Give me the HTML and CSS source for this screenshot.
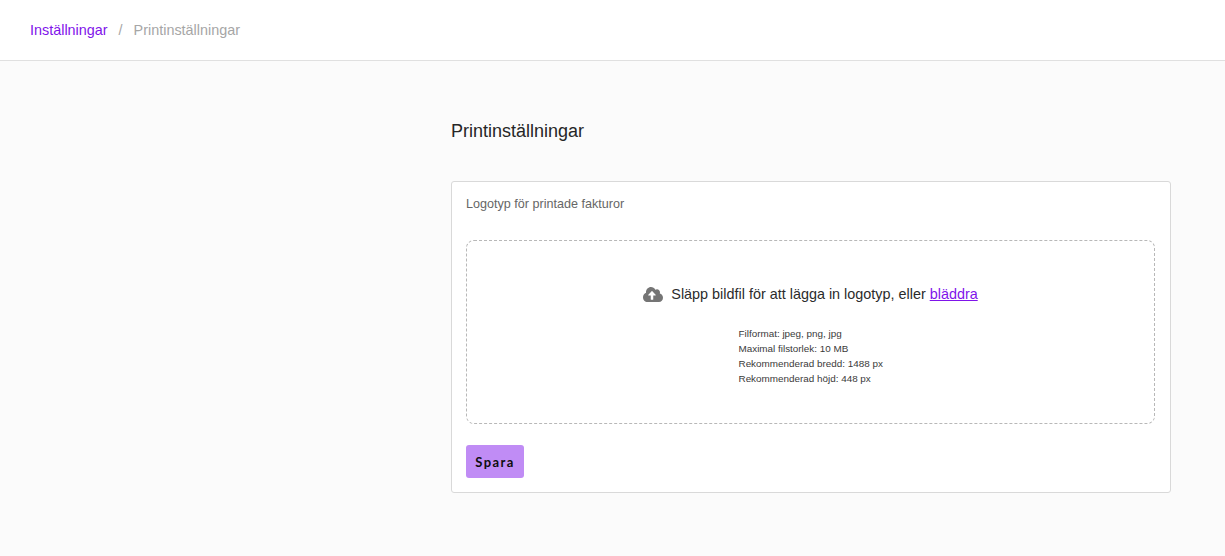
FILE: index.html
```html
<!DOCTYPE html>
<html lang="sv">
<head>
<meta charset="utf-8">
<title>Printinställningar</title>
<link rel="stylesheet" href="styles.css">
</head>
<body>
<header class="topbar">
  <nav class="crumbs">
    <a class="crumb-link" href="#">Inställningar</a>
    <span class="crumb-sep">/</span>
    <span class="crumb-current">Printinställningar</span>
  </nav>
</header>
<main class="content">
  <h1 class="page-title">Printinställningar</h1>
  <section class="card">
    <h2 class="card-label">Logotyp för printade fakturor</h2>
    <div class="dropzone">
      <p class="drop-line">
        <svg class="cloud" viewBox="0 32 640 448" preserveAspectRatio="none" aria-hidden="true"><path d="M537.6 226.6c4.1-10.7 6.4-22.4 6.4-34.6 0-53-43-96-96-96-19.7 0-38.1 6-53.3 16.2C367 64.2 315.3 32 256 32c-88.4 0-160 71.6-160 160 0 2.7.1 5.4.2 8.1C40.2 219.8 0 273.2 0 336c0 79.5 64.5 144 144 144h368c70.7 0 128-57.3 128-128 0-61.9-44-113.6-102.4-125.4zM393.4 288H328v112c0 8.8-7.2 16-16 16h-48c-8.8 0-16-7.2-16-16V288h-65.4c-14.3 0-21.4-17.2-11.3-27.3l105.4-105.4c6.2-6.2 16.4-6.2 22.6 0l105.4 105.4c10.1 10.1 2.9 27.3-11.4 27.3z"/></svg>
        <span>Släpp bildfil för att lägga in logotyp, eller <a class="browse" href="#">bläddra</a></span>
      </p>
      <ul class="specs">
        <li>Filformat: jpeg, png, jpg</li>
        <li>Maximal filstorlek: 10 MB</li>
        <li>Rekommenderad bredd: 1488 px</li>
        <li>Rekommenderad höjd: 448 px</li>
      </ul>
    </div>
    <button class="save" type="button">Spara</button>
  </section>
</main>
</body>
</html>
```
FILE: styles.css
```css
* { box-sizing: border-box; }
html, body { margin: 0; height: 100%; }
body {
  background: #fbfbfb;
  font-family: "Liberation Sans", Arial, sans-serif;
  color: #1f1f1f;
  overflow: hidden;
}
.topbar {
  height: 61px;
  background: #fff;
  border-bottom: 1px solid #e0e0e0;
  padding-left: 30px;
  display: flex;
  align-items: center;
}
.crumbs { display: flex; font-size: 14.4px; line-height: 16px; }
.crumb-link { color: #7f14ea; text-decoration: none; }
.crumb-sep { color: #a6a6a6; margin: 0 11px; }
.crumb-current { color: #a6a6a6; }
.content { padding: 60px 54px 0 451px; }
.page-title {
  margin: 0;
  font-size: 18px;
  line-height: 20px;
  font-weight: 400;
  color: #262626;
}
.card {
  margin-top: 40px;
  height: 312px;
  background: #fff;
  border: 1px solid #d9d9d9;
  border-radius: 3px;
  padding: 14px;
}
.card-label {
  margin: 0;
  font-size: 12.6px;
  line-height: 16px;
  font-weight: 400;
  color: #666;
}
.dropzone {
  margin: 28px 1px 0 0;
  height: 184px;
  border: 1px dashed #b8b8b8;
  border-radius: 8px;
  padding-top: 41px;
  display: flex;
  flex-direction: column;
  align-items: center;
}
.drop-line {
  margin: 0;
  display: flex;
  align-items: center;
  gap: 8px;
  font-size: 14.4px;
  line-height: 24px;
  color: #2b2b2b;
}
.cloud { fill: #757575; width: 20px; height: 15px; }
.browse { color: #7f14ea; }
.specs {
  list-style: none;
  margin: 20px 0 0;
  padding: 0;
  font-size: 9.9px;
  line-height: 15px;
  color: #3a3a3a;
  width: 144px;
  white-space: nowrap;
}
.save {
  display: block;
  margin-top: 21px;
  width: 58px;
  height: 33px;
  padding: 0;
  border: 0;
  border-radius: 3px;
  background: #c08cf5;
  color: #0d0d0d;
  font-family: Lato, sans-serif;
  font-weight: 700;
  font-size: 13px;
  letter-spacing: 1.4px;
}
```
